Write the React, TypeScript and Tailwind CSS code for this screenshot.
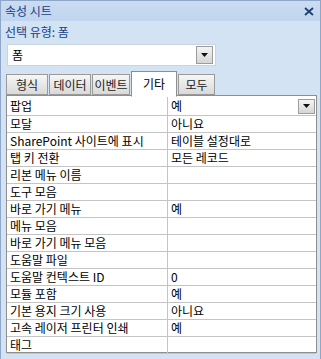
import React from 'react';

const rows: [string, string][] = [
  ['모달', '아니요'],
  ['SharePoint 사이트에 표시', '테이블 설정대로'],
  ['탭 키 전환', '모든 레코드'],
  ['리본 메뉴 이름', ''],
  ['도구 모음', ''],
  ['바로 가기 메뉴', '예'],
  ['메뉴 모음', ''],
  ['바로 가기 메뉴 모음', ''],
  ['도움말 파일', ''],
  ['도움말 컨텍스트 ID', '0'],
  ['모듈 포함', '예'],
  ['기본 용지 크기 사용', '아니요'],
  ['고속 레이저 프린터 인쇄', '예'],
  ['태그', ''],
];

const DropArrow = ({ className }: { className: string }) => (
  <div className={`flex items-center justify-center border border-[#9c9c9c] bg-gradient-to-b from-[#f4f4f4] to-[#d6d6d6] ${className}`}>
    <svg width="7" height="4" viewBox="0 0 7 4">
      <path d="M0 0h7L3.5 4z" fill="#111" />
    </svg>
  </div>
);

const Tab = ({ label, width }: { label: string; width: string }) => (
  <div
    className={`h-[21px] mb-[1px] mr-[1px] flex items-center justify-center bg-gradient-to-b from-[#f6f6f6] to-[#d9d9d9] border border-[#9a9a9a] leading-none text-[#222] ${width}`}
  >
    {label}
  </div>
);

const App = () => {
  return (
    <div
      className="w-[321px] h-[359px] flex flex-col bg-[#d4e3f4] border-x border-[#8ea7c9] text-[12px] overflow-hidden"
      style={{ fontFamily: '"Noto Sans CJK KR", "Noto Sans", sans-serif' }}
    >
      {/* title bar */}
      <div className="h-[21px] shrink-0 flex items-center justify-between pl-[4px] pr-[6px] bg-gradient-to-b from-[#cbdcf2] to-[#c0d5ef] border-t border-[#8ea7c9] text-[#15428b] leading-none">
        <span>속성 시트</span>
        <svg width="10" height="9" viewBox="0 0 10 9">
          <path d="M1 1l8 7M9 1L1 8" stroke="#1f3f72" strokeWidth="1.8" />
        </svg>
      </div>

      <div className="pl-[4px] pt-[3px] h-[21px] text-[#15428b] leading-[16px]">선택 유형: 폼</div>

      {/* object selector */}
      <div className="ml-[6px] mt-[2px] w-[209px] h-[22px] flex items-center justify-between bg-white border border-[#c9d5e4] pl-[4px] pr-[2px]">
        <span className="leading-none">폼</span>
        <DropArrow className="w-[17px] h-[18px]" />
      </div>

      {/* tabs */}
      <div className="mt-[5px] ml-[5px] flex items-end h-[25px] relative z-10">
        <Tab label="형식" width="w-[42px]" />
        <Tab label="데이터" width="w-[42px]" />
        <Tab label="이벤트" width="w-[38px]" />
        <div className="w-[46px] h-[26px] -mb-[1px] mr-[1px] flex items-center justify-center bg-white border border-[#8e8e8e] border-b-white leading-none">
          기타
        </div>
        <Tab label="모두" width="w-[37px]" />
      </div>

      {/* property grid */}
      <div className="ml-[5px] mt-[-1px] w-[311px] h-[258px] bg-white border border-[#8e8e8e] flex flex-col">
        <div className="h-[20px] flex border-b border-[#c4c4c4] mt-[1px]">
          <div className="w-[161px] pl-[3px] border-r border-[#c4c4c4] leading-[18px]">팝업</div>
          <div className="flex-1 flex items-center justify-between pl-[3px] pr-[1px]">
            <span className="leading-[18px]">예</span>
            <DropArrow className="w-[17px] h-[15px]" />
          </div>
        </div>
        {rows.map(([k, v]) => (
          <div key={k} className="h-[17px] shrink-0 flex border-b border-[#c4c4c4] leading-[16px]">
            <div className="w-[161px] pl-[3px] border-r border-[#c4c4c4] whitespace-nowrap">{k}</div>
            <div className="flex-1 pl-[3px] whitespace-nowrap">{v}</div>
          </div>
        ))}
      </div>
    </div>
  );
};

export default App;
